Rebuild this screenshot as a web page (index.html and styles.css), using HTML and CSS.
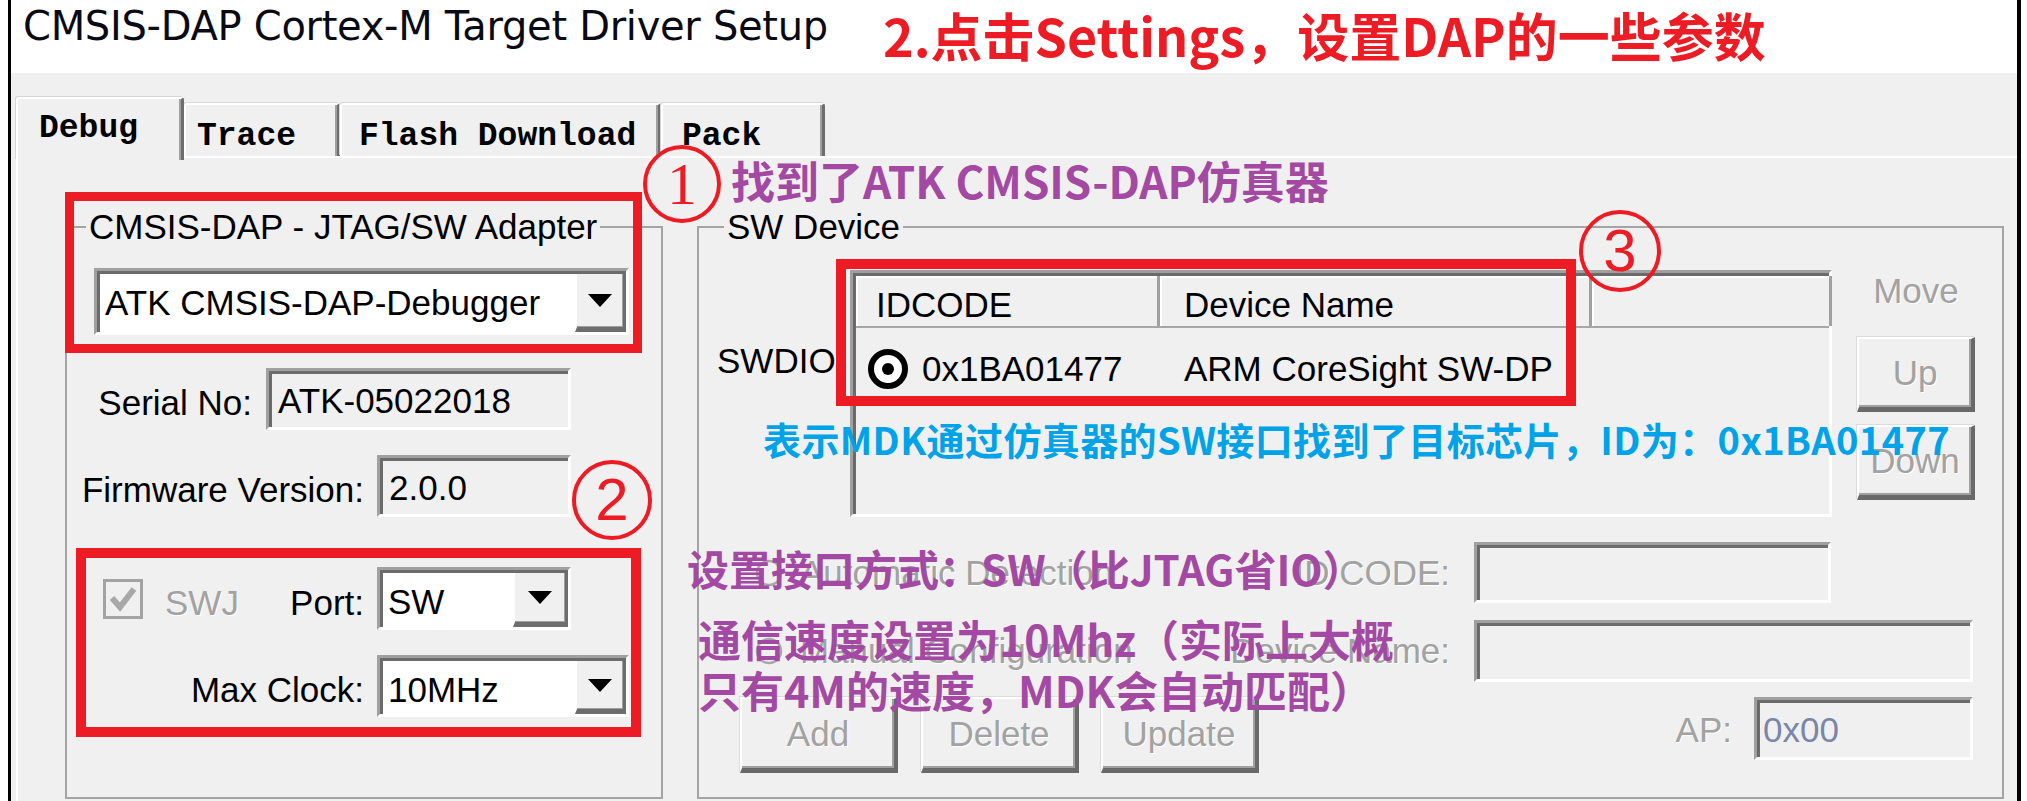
FILE: index.html
```html
<!DOCTYPE html>
<html lang="zh-CN">
<head>
<meta charset="utf-8">
<title>CMSIS-DAP Cortex-M Target Driver Setup</title>
<link rel="stylesheet" href="styles.css">
</head>
<body>
<div class="frame">
  <header class="titlebar">
    <h1 class="title">CMSIS-DAP Cortex-M Target Driver Setup</h1>
    <p class="note-red">2.点击Settings，设置DAP的一些参数</p>
  </header>
  <div class="dialog">
    <nav class="tabs">
      <div class="tab tab-debug active">Debug</div>
      <div class="tab tab-trace">Trace</div>
      <div class="tab tab-flash">Flash Download</div>
      <div class="tab tab-pack">Pack</div>
    </nav>
    <section class="page">
      <fieldset class="group group-adapter">
        <legend>CMSIS-DAP - JTAG/SW Adapter</legend>
        <div class="combo combo-adapter">
          <span class="combo-text">ATK CMSIS-DAP-Debugger</span>
          <span class="combo-btn"><svg width="24" height="13" viewBox="0 0 24 13"><polygon points="0,0 24,0 12,13" fill="#000"/></svg></span>
        </div>
        <div class="field-row row-serial">
          <span class="lbl lbl-serial">Serial No:</span>
          <span class="input input-serial">ATK-05022018</span>
        </div>
        <div class="field-row row-fw">
          <span class="lbl lbl-wide">Firmware Version:</span>
          <span class="input input-fw">2.0.0</span>
        </div>
        <div class="field-row row-port">
          <div class="port-lbl">
            <span class="check"><svg width="40" height="40" viewBox="0 0 40 40"><rect x="1.5" y="1.5" width="37" height="37" fill="#f0f0f0" stroke="#a3a3a3" stroke-width="3"/><path d="M9 19 L17 28 L31 10" fill="none" stroke="#a8a8a8" stroke-width="6"/></svg></span>
            <span class="disabled swj">SWJ</span>
            <span class="lbl port-text">Port:</span>
          </div>
          <div class="combo combo-port">
            <span class="combo-text">SW</span>
            <span class="combo-btn"><svg width="24" height="13" viewBox="0 0 24 13"><polygon points="0,0 24,0 12,13" fill="#000"/></svg></span>
          </div>
        </div>
        <div class="field-row row-clock">
          <span class="lbl lbl-wide">Max Clock:</span>
          <div class="combo combo-clock">
            <span class="combo-text">10MHz</span>
            <span class="combo-btn"><svg width="24" height="13" viewBox="0 0 24 13"><polygon points="0,0 24,0 12,13" fill="#000"/></svg></span>
          </div>
        </div>
      </fieldset>

      <fieldset class="group group-device">
        <legend>SW Device</legend>
        <div class="sw-top">
          <span class="swdio">SWDIO</span>
          <div class="listview">
            <div class="lv-head">
              <span class="lv-h lv-c1">IDCODE</span>
              <span class="lv-h lv-c2">Device Name</span>
              <span class="lv-h lv-c3"></span>
            </div>
            <div class="lv-row">
              <span class="lv-c1 lv-cell1">
                <svg width="42" height="42" viewBox="0 0 42 42"><circle cx="21" cy="21" r="17" fill="#fff" stroke="#000" stroke-width="6"/><circle cx="21" cy="21" r="6" fill="#000"/></svg>
                <span class="lv-id">0x1BA01477</span>
              </span>
              <span class="lv-c2 lv-cell2">ARM CoreSight SW-DP</span>
            </div>
          </div>
          <div class="move-col">
            <span class="disabled move-lbl">Move</span>
            <span class="btn btn-up"><span class="disabled">Up</span></span>
            <span class="btn btn-down"><span class="disabled">Down</span></span>
          </div>
        </div>
        <div class="opt-row row-id">
          <span class="radio-opt">
            <svg width="28" height="28" viewBox="0 0 28 28"><circle cx="14" cy="14" r="12" fill="#f0f0f0" stroke="#a8a8a8" stroke-width="2.5"/></svg>
            <span class="disabled opt-text">Automatic Detection</span>
          </span>
          <span class="disabled row-lbl">ID CODE:</span>
          <span class="input input-id"></span>
        </div>
        <div class="opt-row row-name">
          <span class="radio-opt">
            <svg width="28" height="28" viewBox="0 0 28 28"><circle cx="14" cy="14" r="12" fill="#f0f0f0" stroke="#a8a8a8" stroke-width="2.5"/></svg>
            <span class="disabled opt-text">Manual Configuration</span>
          </span>
          <span class="disabled row-lbl">Device Name:</span>
          <span class="input input-name"></span>
        </div>
        <div class="row-btns">
          <span class="btn btn-add"><span class="disabled">Add</span></span>
          <span class="btn btn-delete"><span class="disabled">Delete</span></span>
          <span class="btn btn-update"><span class="disabled">Update</span></span>
          <span class="disabled ap-lbl">AP:</span>
          <span class="input input-ap">0x00</span>
        </div>
      </fieldset>
    </section>
  </div>
</div>

<div class="annotations">
  <div class="box box1"></div>
  <div class="box box2"></div>
  <div class="box box3"></div>
  <div class="circ circ1">1</div>
  <div class="circ circ2">2</div>
  <div class="circ circ3">3</div>
  <p class="ann ann-p1">找到了ATK CMSIS-DAP仿真器</p>
  <p class="ann ann-blue">表示MDK通过仿真器的SW接口找到了目标芯片，ID为：0x1BA01477</p>
  <p class="ann ann-p2">设置接口方式：SW（比JTAG省IO）</p>
  <p class="ann ann-p3">通信速度设置为10Mhz（实际上大概<br>只有4M的速度，MDK会自动匹配）</p>
</div>
</body>
</html>
```

FILE: styles.css
```css
* { box-sizing: border-box; }
html, body { margin: 0; padding: 0; }
body {
  width: 2027px;
  height: 801px;
  overflow: hidden;
  position: relative;
  background: #fff;
  font-family: "Liberation Sans", Arial, sans-serif;
  font-size: 35px;
  color: #000;
}

.frame {
  margin-left: 8px;
  width: 2013px;
  height: 801px;
  border-left: 3px solid #000;
  border-right: 4px solid #000;
  display: flex;
  flex-direction: column;
  background: #f0f0f0;
}

/* title bar */
.titlebar {
  flex: none;
  height: 73px;
  background: #fff;
  display: flex;
  align-items: flex-start;
}
.title {
  margin: 0;
  width: 872px;
  padding: 4px 0 0 12px;
  font: 400 40px/44px "DejaVu Sans", sans-serif;
  letter-spacing: -0.3px;
  white-space: nowrap;
  color: #0a0a14;
}
.note-red {
  margin: 0;
  padding-top: 5px;
  font: 700 52px/60px "Noto Sans CJK SC", sans-serif;
  color: #ed1c24;
  white-space: nowrap;
}

/* dialog */
.dialog {
  flex: 1;
  display: flex;
  flex-direction: column;
}
.tabs {
  flex: none;
  height: 83px;
  display: flex;
  align-items: flex-end;
  padding-left: 5px;
}
.tab {
  position: relative;
  height: 53px;
  background: #f0f0f0;
  border-top: 2px solid #fff;
  border-left: 2px solid #fff;
  border-right: 3px solid #6d6d6d;
  border-radius: 3px 3px 0 0;
  box-shadow: inset -2px 0 0 #a0a0a0, -1px -1px 0 #d6d6d6;
  font: 700 33px/33px "Liberation Mono", monospace;
  padding-top: 15px;
  white-space: nowrap;
}
.tab.active {
  height: 63px;
  margin-bottom: -4px;
  padding-top: 13px;
  z-index: 1;
}
.tab-debug { width: 168px; padding-left: 21px; }
.tab-trace { width: 156px; padding-left: 11px; }
.tab-flash { width: 321px; padding-left: 17px; }
.tab-pack { width: 164px; padding-left: 19px; }

.page {
  flex: 1;
  margin-left: 5px;
  border-top: 2px solid #fff;
  border-left: 2px solid #fff;
  display: flex;
  align-items: flex-start;
  padding: 50px 0 0 47px;
}

/* group boxes */
.group {
  margin: 0;
  padding: 0;
  min-width: 0;
  height: 591px;
  border: 2px solid #a4a4a4;
}
.group legend {
  font-size: 35px;
  line-height: 38px;
  padding: 0 3px;
  margin-left: 19px;
  white-space: nowrap;
}
.group-adapter { width: 598px; }
.group-device { width: 1307px; margin-left: 34px; }
.group-device legend { margin-left: 25px; }

/* sunken controls */
.combo, .input, .listview {
  border-top: 3px solid #a0a0a0;
  border-left: 3px solid #a0a0a0;
  border-right: 3px solid #fff;
  border-bottom: 3px solid #fff;
  box-shadow: inset 3px 3px 0 #6b6b6b;
  padding: 3px 0 0 3px;
}
.combo {
  display: flex;
  background: #fff;
}
.combo-text {
  flex: 1;
  padding-left: 5px;
  line-height: 58px;
  white-space: nowrap;
  overflow: hidden;
}
.combo-btn {
  flex: none;
  width: 51px;
  background: #f0f0f0;
  border-left: 2px solid #fff;
  border-right: 3px solid #6d6d6d;
  border-bottom: 5px solid #6d6d6d;
  box-shadow: inset -1px -1px 0 #a0a0a0;
  display: flex;
  align-items: center;
  justify-content: center;
}
.input {
  display: block;
  background: #f0f0f0;
  padding-left: 9px;
  line-height: 53px;
  white-space: nowrap;
}

.field-row { display: flex; align-items: center; }
.lbl { margin-top: 8px; line-height: 40px; white-space: nowrap; }
.lbl-wide { width: 297px; text-align: right; }
.lbl-serial { width: 185px; text-align: right; }

.combo-adapter { margin: 22px 0 0 27px; width: 535px; height: 67px; }
.row-serial { margin-top: 33px; height: 62px; }
.input-serial { margin-left: 14px; width: 305px; height: 62px; }
.row-fw { margin-top: 25px; height: 62px; }
.input-fw { margin-left: 13px; width: 194px; height: 62px; }
.row-port { margin-top: 50px; height: 63px; }
.port-lbl { width: 297px; display: flex; align-items: center; }
.check { display: flex; margin-left: 36px; }
.swj { margin-left: 22px; margin-top: 8px; line-height: 40px; }
.port-text { margin-left: auto; }
.combo-port { margin-left: 13px; width: 194px; height: 63px; }
.combo-port .combo-btn { width: 55px; }
.row-clock { margin-top: 25px; height: 62px; }
.combo-clock { margin-left: 13px; width: 252px; height: 62px; }

.disabled {
  color: #a2a2a2;
  text-shadow: 1px 1px 0 #fff;
  white-space: nowrap;
}

/* SW device */
.sw-top { display: flex; margin-top: 24px; height: 247px; }
.swdio {
  flex: none;
  margin-left: 18px;
  width: 133px;
  margin-top: 71px;
  line-height: 40px;
  white-space: nowrap;
}
.listview {
  flex: none;
  width: 982px;
  height: 247px;
  background: #f0f0f0;
}
.lv-head {
  display: flex;
  height: 52px;
  border-bottom: 2px solid #a6a6a6;
}
.lv-h {
  height: 50px;
  line-height: 58px;
  border-right: 3px solid #a0a0a0;
  box-shadow: inset 2px 2px 0 #fff;
  white-space: nowrap;
}
.lv-c1 { width: 304px; padding-left: 20px; flex: none; }
.lv-c2 { width: 432px; padding-left: 24px; flex: none; }
.lv-c3 { width: 240px; flex: none; }
.lv-row {
  display: flex;
  align-items: center;
  height: 76px;
  padding-top: 6px;
  white-space: nowrap;
}
.lv-cell1 { display: flex; align-items: center; padding-left: 11px; }
.lv-id { margin-left: 13px; line-height: 40px; }
.lv-cell2 { line-height: 40px; }

.move-col {
  flex: none;
  margin-left: 25px;
  width: 118px;
  display: flex;
  flex-direction: column;
  align-items: center;
}
.move-lbl { margin-top: 1px; line-height: 40px; }

.btn {
  display: flex;
  align-items: center;
  justify-content: center;
  background: #f0f0f0;
  border-top: 2px solid #fff;
  border-left: 2px solid #fff;
  border-right: 4px solid #696969;
  border-bottom: 5px solid #696969;
  box-shadow: inset -2px -2px 0 #a0a0a0, -1px -1px 0 #dcdcdc;
  line-height: 40px;
}
.btn-up { margin-top: 26px; width: 118px; height: 75px; }
.btn-down { margin-top: 13px; width: 118px; height: 75px; }

.opt-row { display: flex; align-items: center; }
.radio-opt {
  flex: none;
  margin-left: 56px;
  width: 430px;
  display: flex;
  align-items: center;
}
.opt-text { margin-left: 17px; line-height: 40px; }
.row-lbl { flex: none; width: 265px; text-align: right; line-height: 40px; }
.row-id { margin-top: 25px; height: 61px; }
.input-id { margin-left: 24px; width: 357px; height: 61px; }
.row-name { margin-top: 17px; height: 62px; }
.input-name { margin-left: 24px; width: 499px; height: 62px; }

.row-btns { display: flex; align-items: flex-start; margin-top: 15px; height: 76px; }
.btn-add { margin-left: 41px; width: 158px; height: 76px; }
.btn-delete { margin-left: 23px; width: 158px; height: 76px; }
.btn-update { margin-left: 22px; width: 158px; height: 76px; }
.ap-lbl { margin-left: auto; line-height: 66px; }
.input-ap {
  margin-left: 22px;
  margin-right: 29px;
  width: 219px;
  height: 63px;
  padding-left: 6px;
  color: #7a86a8;
}

/* annotation overlay */
.annotations { position: absolute; left: 0; top: 0; width: 2027px; height: 801px; pointer-events: none; }
.box { position: absolute; border: 9px solid #ed1c24; }
.box1 { left: 65px; top: 192px; width: 577px; height: 161px; }
.box2 { left: 76px; top: 548px; width: 565px; height: 189px; border-width: 10px; }
.box3 { left: 836px; top: 259px; width: 740px; height: 147px; border-width: 10px; }

.circ {
  position: absolute;
  border: 4px solid #ed1c24;
  border-radius: 50%;
  color: #ed1c24;
  display: flex;
  align-items: center;
  justify-content: center;
  font: 400 60px/1 "Liberation Sans", sans-serif;
}
.circ1 { left: 643px; top: 145px; width: 78px; height: 78px; font-family: "Liberation Serif", serif; }
.circ2 { left: 572px; top: 460px; width: 80px; height: 80px; }
.circ3 { left: 1579px; top: 210px; width: 82px; height: 82px; }

.ann {
  position: absolute;
  margin: 0;
  font-family: "Noto Sans CJK SC", sans-serif;
  font-weight: 700;
  line-height: 1;
  white-space: nowrap;
  color: #a349a4;
}
.ann-p1 { left: 731px; top: 158px; font-size: 44px; }
.ann-blue { left: 763px; top: 420px; font-size: 38px; letter-spacing: 0.4px; color: #00a2e8; }
.ann-p2 { left: 687px; top: 547px; font-size: 42px; }
.ann-p3 { left: 698px; top: 613px; font-size: 43px; line-height: 51px; }
```
